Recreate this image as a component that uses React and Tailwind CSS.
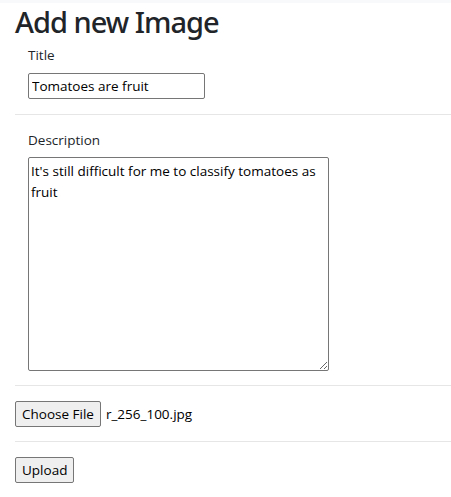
export default function App() {
  return (
    <div className="min-h-[497px] bg-white text-[#212529] font-['Open_Sans',sans-serif]">
      <div className="h-[3px] bg-[#f8f9fa]" />
      <div className="pl-[15px]">
        <h2 className="font-['Noto_Sans',sans-serif] text-[29px] leading-[38px] font-medium tracking-[-1px] mb-[4px]">Add new Image</h2>
        <div className="pl-[13px] flex flex-col">
          <label className="text-[13.5px] leading-[20px] mb-[8px]">Title</label>
          <input
            defaultValue="Tomatoes are fruit"
            className="w-[177px] h-[26px] border border-[#767676] rounded-[2px] px-[3px] text-[13.5px] text-black outline-none"
          />
        </div>
        <hr className="mt-[15px] mb-[15px] border-t border-[#e6e6e6]" />
        <div className="pl-[13px] flex flex-col">
          <label className="text-[13.5px] leading-[20px] mb-[7px]">Description</label>
          <textarea
            defaultValue="It's still difficult for me to classify tomatoes as fruit"
            className="w-[301px] h-[214px] border border-[#767676] rounded-[2px] px-[2px] pt-[3px] text-[13.5px] leading-[21px] text-black outline-none resize-y"
          />
        </div>
        <hr className="mt-[14px] mb-[15px] border-t border-[#e6e6e6]" />
        <div className="flex items-center gap-[5px]">
          <button className="h-[26px] px-[6px] bg-[#efefef] border border-[#767676] rounded-[2px] text-[13.5px] text-black">
            Choose File
          </button>
          <span className="text-[13.5px] text-black">r_256_100.jpg</span>
        </div>
        <hr className="mt-[14px] mb-[15px] border-t border-[#e6e6e6]" />
        <button className="h-[26px] px-[6px] bg-[#efefef] border border-[#767676] rounded-[2px] text-[13.5px] text-black">
          Upload
        </button>
      </div>
    </div>
  );
}
